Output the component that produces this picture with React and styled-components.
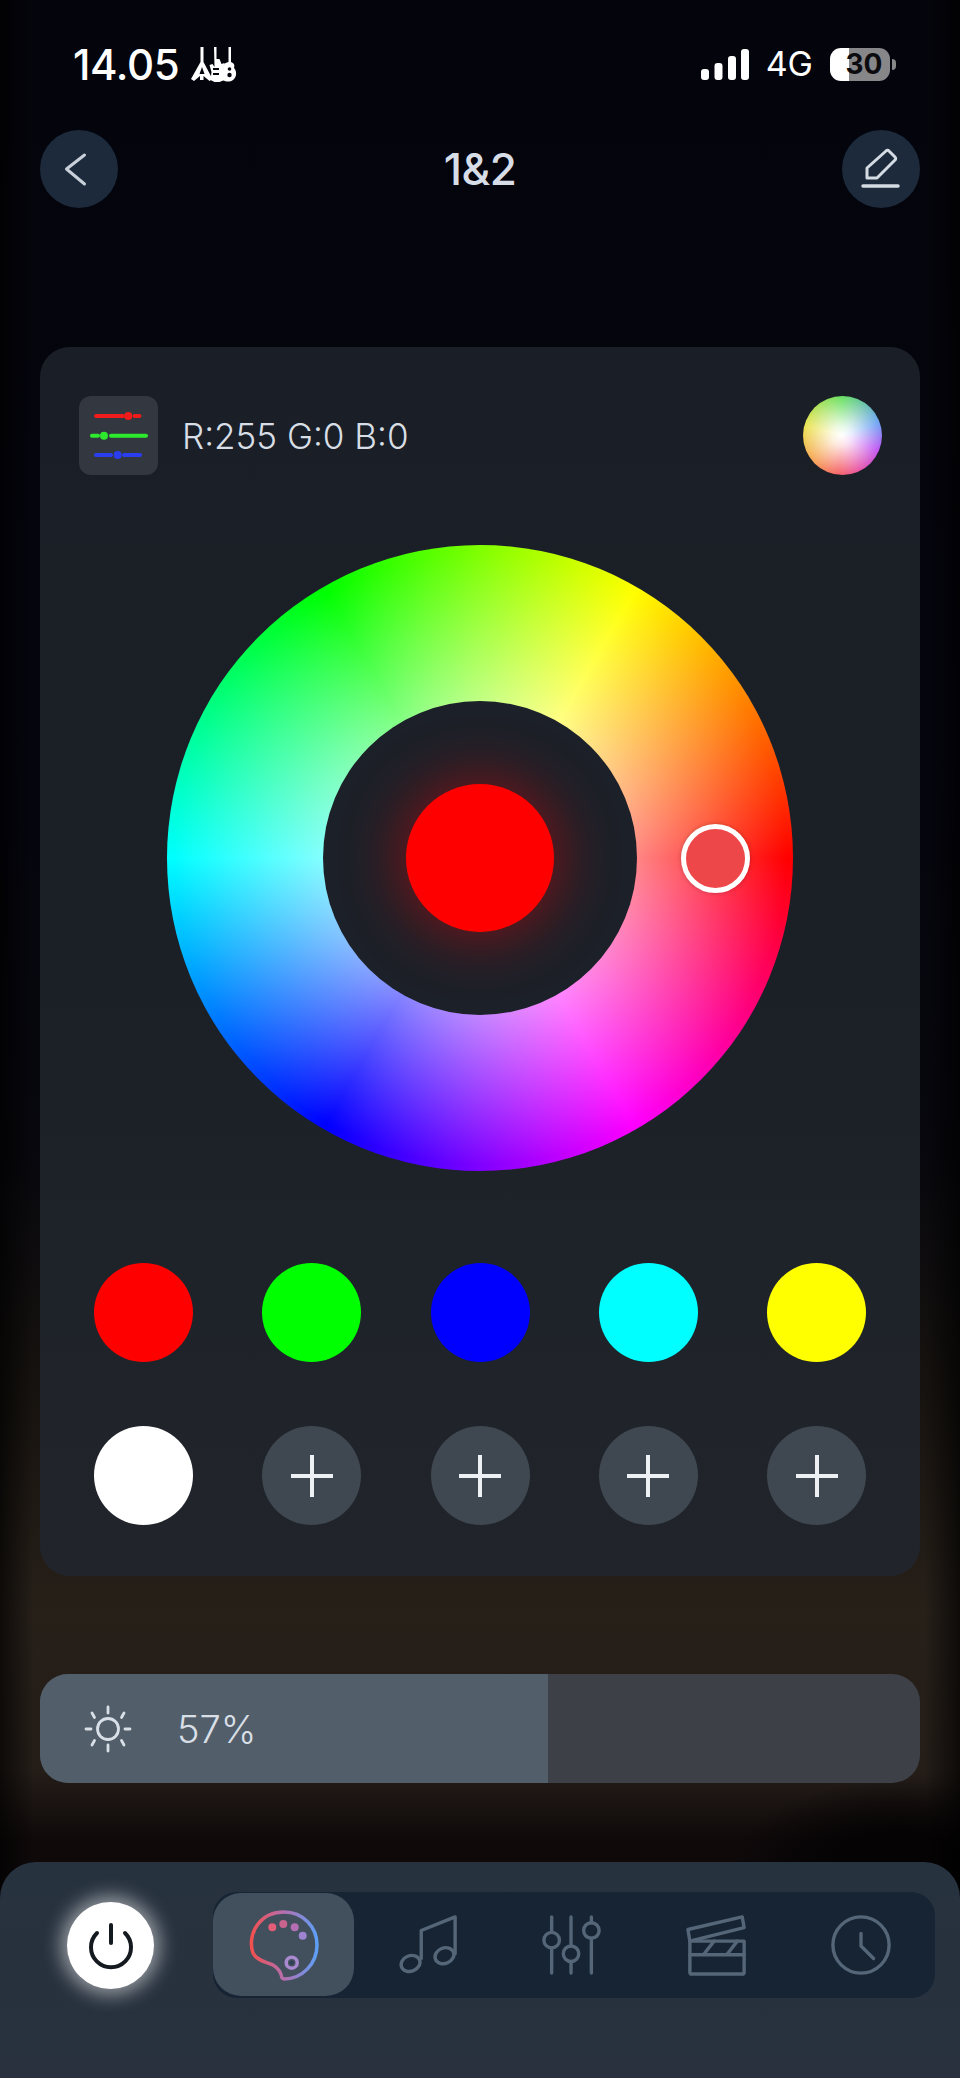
import React from 'react';
import styled, { createGlobalStyle } from 'styled-components';

const GlobalStyle = createGlobalStyle`
  html, body {
    margin: 0;
    padding: 0;
    background: #05050e;
  }

  * {
    box-sizing: border-box;
  }
`;

const swatches = ['#ff0000', '#00ff00', '#0000ff', '#00ffff', '#ffff00', '#ffffff', null, null, null, null];
const brightness = 57.7;

function GuitarsIcon() {
  return (
    <StatusGlyph viewBox="0 0 70 55" fill="#fff">
      <path d="M21.500 12h3v15l9 17-3 2-6-5v4h-3.500v-4l-6 5-3-2 9.500-17z" />
      <path d="M35 12h2.500v12h3l2 5 3-1-1 9 1 8-5 2h-5l-4-2 1-8-2-7 3-1 2 3z" />
      <path d="M49.500 12h2.500v15c3 1 4 3 3 6 3 3 3 9-1 12-3 2-7 2-10 0-2-3-2-9 1-12-1-3 0-5 4.500-6z" />
      <g fill="#05050e">
        <path d="M23 32l2.500 7h-5z" />
        <rect x="34" y="33" width="6" height="2" />
        <rect x="34" y="38" width="6" height="2" />
        <circle cx="50.500" cy="34" r="1.800" />
        <circle cx="50.500" cy="40" r="2.200" />
      </g>
    </StatusGlyph>
  );
}

function SignalIcon() {
  return (
    <SignalSvg viewBox="0 0 48 31" fill="#fff">
      <rect x="0" y="20" width="8" height="11" rx="3" />
      <rect x="13.500" y="14" width="8" height="17" rx="3" />
      <rect x="27" y="7" width="8" height="24" rx="3" />
      <rect x="40" y="0" width="8" height="31" rx="3" />
    </SignalSvg>
  );
}

function SliderBarsIcon() {
  return (
    <svg width="79" height="79" viewBox="0 0 79 79" fill="none" strokeWidth="4" strokeLinecap="round">
      <g stroke="#f01c1c" fill="#f01c1c">
        <path d="M17 20h27M55.500 20h5" />
        <circle cx="49.300" cy="20" r="2" />
      </g>
      <g stroke="#2eea2e" fill="#2eea2e">
        <path d="M13 39.700h6M32 39.700h35" />
        <circle cx="25" cy="39.700" r="2" />
      </g>
      <g stroke="#2a3ef0" fill="#2a3ef0">
        <path d="M17 59h15M45 59h16" />
        <circle cx="38.700" cy="59" r="2" />
      </g>
    </svg>
  );
}

function SunIcon() {
  return (
    <svg width="48" height="48" viewBox="0 0 48 48" fill="none" stroke="#d8dfe7" strokeWidth="2.800" strokeLinecap="round">
      <circle cx="24" cy="24" r="10.500" />
      <path d="M24 2v6M24 40v6M2 24h5M41 24h5M8 8l2.500 4.500M40 8l-2.500 4.500M8 40l2.500-4.500M40 40l-2.500-4.500" />
    </svg>
  );
}

function PaletteIcon() {
  return (
    <svg width="72" height="72" viewBox="0 0 72 72" fill="none">
      <defs>
        <linearGradient id="paletteStroke" x1="0" y1="0" x2="1" y2="0">
          <stop offset="0" stopColor="#f2504f" />
          <stop offset="0.5" stopColor="#b56fb0" />
          <stop offset="1" stopColor="#5d9ff7" />
        </linearGradient>
      </defs>
      <path
        d="M34 69C33 63 30 59 25 56 19 53 9 52 5 44 2 36 3 24 10 15 17 6 27 3 36 3 55 3 69 18 69 36 69 55 54 70 36 70Z"
        stroke="url(#paletteStroke)"
        strokeWidth="3.500"
        strokeLinejoin="round"
      />
      <circle cx="24.300" cy="18.300" r="4" fill="#e25d78" />
      <circle cx="35.300" cy="15" r="4" fill="#c9648f" />
      <circle cx="46.700" cy="18.300" r="4" fill="#b46fb4" />
      <circle cx="54.700" cy="26.700" r="4" fill="#9d83d0" />
      <circle cx="43.700" cy="53.700" r="5.500" stroke="#a98ad0" strokeWidth="3.500" />
      <circle cx="43.700" cy="53.700" r="2" fill="#2f3f55" />
    </svg>
  );
}

function MusicIcon() {
  return (
    <NavSvg viewBox="0 0 60 64">
      <ellipse cx="12" cy="51" rx="10" ry="8" transform="rotate(-22 12 51)" />
      <ellipse cx="47" cy="43" rx="10" ry="8" transform="rotate(-22 47 43)" />
      <path d="M23 46V17L58 3v38" />
    </NavSvg>
  );
}

function SlidersIcon() {
  return (
    <NavSvg viewBox="0 0 60 64">
      <path d="M9 3v16M9 35v26M29 3v30M29 49v12M50 3v6M50 25v36" />
      <circle cx="9" cy="27" r="8" />
      <circle cx="29" cy="41" r="8" />
      <circle cx="50" cy="17" r="8" />
    </NavSvg>
  );
}

function ClapperIcon() {
  return (
    <NavSvg viewBox="0 0 64 64">
      <path d="M4 28h56v32a2 2 0 0 1-2 2H6a2 2 0 0 1-2-2z" />
      <path d="M4 42h56M18 42l11-14M42 42l11-14" />
      <path d="M2 16L58 3l2 11L4 28z" />
    </NavSvg>
  );
}

function ClockIcon() {
  return (
    <NavSvg viewBox="0 0 64 64">
      <circle cx="32" cy="32" r="29" />
      <path d="M32 20v13l13 13" />
    </NavSvg>
  );
}

const navIcons = [PaletteIcon, MusicIcon, SlidersIcon, ClapperIcon, ClockIcon];

export default function App() {
  return (
    <Page>
      <GlobalStyle />
      <StatusBar>
        <TimeGroup>
          <Time>14.05</Time>
          <GuitarsIcon />
        </TimeGroup>
        <StatusRight>
          <SignalIcon />
          <Network>4G</Network>
          <Battery>30</Battery>
        </StatusRight>
      </StatusBar>

      <Header>
        <RoundButton>
          <svg width="78" height="78" viewBox="0 0 78 78" fill="none" stroke="#c9d0da" strokeWidth="3" strokeLinecap="round" strokeLinejoin="round">
            <path d="M44.500 25L26.500 39l18 15" />
          </svg>
        </RoundButton>
        <Title>1&amp;2</Title>
        <RoundButton>
          <svg width="78" height="78" viewBox="0 0 78 78" fill="none" stroke="#d5dbe3" strokeWidth="3" strokeLinecap="round" strokeLinejoin="round">
            <path d="M44 21a2 2 0 0 1 3 0l6 6a2 2 0 0 1 0 3L35 48H25V38z" />
            <path d="M21 56h35" strokeWidth="3.500" />
          </svg>
        </RoundButton>
      </Header>

      <Card>
        <CardHead>
          <RgbBadge><SliderBarsIcon /></RgbBadge>
          <RgbText>R:255 G:0 B:0</RgbText>
          <ColorBall />
        </CardHead>

        <Wheel>
          <WheelHole>
            <CurrentColor />
          </WheelHole>
          <WheelThumb />
        </Wheel>

        <SwatchGrid>
          {swatches.map((color, i) => (
            <Swatch key={i} $color={color}>
              {!color && <PlusMark />}
            </Swatch>
          ))}
        </SwatchGrid>
      </Card>

      <Brightness>
        <BrightnessFill style={{ width: `${brightness}%` }} />
        <BrightnessLabel>
          <SunIcon />
          <BrightnessValue>57%</BrightnessValue>
        </BrightnessLabel>
      </Brightness>

      <BottomNav>
        <PowerButton>
          <svg width="48" height="48" viewBox="0 0 48 48" fill="none" stroke="#151a21" strokeWidth="4" strokeLinecap="round">
            <path d="M10 11A20 20 0 1 0 38 11" />
            <path d="M24 3v18" />
          </svg>
        </PowerButton>
        <TabTrack>
          {navIcons.map((Icon, i) => (
            <Tab key={i} $active={i === 0}>
              <Icon />
            </Tab>
          ))}
        </TabTrack>
      </BottomNav>
    </Page>
  );
}

const Page = styled.div`
  width: 960px;
  height: 2078px;
  display: flex;
  flex-direction: column;
  overflow: hidden;
  font-family: Inter, "Liberation Sans", sans-serif;
  background:
    linear-gradient(90deg, rgba(0, 0, 0, 0.65) 0, rgba(0, 0, 0, 0) 34px, rgba(0, 0, 0, 0) 925px, rgba(0, 0, 0, 0.65) 100%),
    radial-gradient(ellipse 170px 90px at 900px 1870px, #050304 40%, rgba(5, 3, 4, 0) 100%),
    linear-gradient(180deg, #04040c 0, #05050e 800px, #07070d 1150px, #17130f 1400px, #272019 1610px, #241d18 1770px, #0f090a 1840px, #0b0708 100%);
`;

const StatusBar = styled.div`
  height: 130px;
  padding: 48px 70px 0 73px;
  display: flex;
  justify-content: space-between;
  align-items: flex-start;
`;

const TimeGroup = styled.div`
  display: flex;
  align-items: flex-start;
`;

const Time = styled.span`
  font-size: 42px;
  line-height: 34px;
  font-weight: 500;
  color: #fff;
  letter-spacing: -0.4px;
`;

const StatusGlyph = styled.svg`
  width: 70px;
  height: 55px;
  margin-top: -13px;
`;

const StatusRight = styled.div`
  display: flex;
  align-items: center;
  height: 34px;
  margin-top: -1px;
`;

const SignalSvg = styled.svg`
  width: 48px;
  height: 31px;
`;

const Network = styled.span`
  margin: 0 17px 0 17px;
  font-size: 34px;
  line-height: 34px;
  color: #fff;
`;

const Battery = styled.span`
  position: relative;
  width: 60px;
  height: 33px;
  border-radius: 11px;
  background: linear-gradient(90deg, #fff 32%, #87878a 32%);
  color: #0c0c10;
  font-size: 28px;
  font-weight: 700;
  line-height: 33px;
  text-align: center;
  padding-left: 8px;

  &::after {
    content: '';
    position: absolute;
    left: 62px;
    top: 11px;
    width: 4px;
    height: 11px;
    border-radius: 0 5px 5px 0;
    background: #87878a;
  }
`;

const Header = styled.div`
  height: 78px;
  padding: 0 40px;
  display: flex;
  justify-content: space-between;
  align-items: center;
`;

const RoundButton = styled.button`
  width: 78px;
  height: 78px;
  padding: 0;
  border: none;
  border-radius: 50%;
  background: #1c2a3b;
  display: block;

  svg {
    display: block;
  }
`;

const Title = styled.div`
  font-size: 44px;
  font-weight: 500;
  color: #d7dde6;
  letter-spacing: -0.5px;
`;

const Card = styled.div`
  width: 880px;
  height: 1229px;
  margin: 139px 0 0 40px;
  padding: 49px 38px 0 39px;
  border-radius: 30px;
  background: linear-gradient(180deg, #1a1f27 0, #1b2027 50%, #21252b 100%);
  display: flex;
  flex-direction: column;
`;

const CardHead = styled.div`
  display: flex;
  align-items: center;
`;

const RgbBadge = styled.div`
  width: 79px;
  height: 79px;
  border-radius: 12px;
  background: #33373f;

  svg {
    display: block;
  }
`;

const RgbText = styled.div`
  margin-left: 24px;
  font-size: 35px;
  font-weight: 300;
  color: #d8dee6;
  flex: 1;
`;

const ColorBall = styled.div`
  width: 79px;
  height: 79px;
  border-radius: 50%;
  background:
    radial-gradient(circle at 50% 50%, #fff 0, rgba(255, 255, 255, 0.85) 18%, rgba(255, 255, 255, 0) 85%),
    conic-gradient(#45d83f 0deg, #4a8ff0 70deg, #b12ff0 112deg, #e42f90 155deg, #f23f45 185deg, #f59130 230deg, #e6dd2c 285deg, #45d83f 360deg);
`;

const Wheel = styled.div`
  position: relative;
  width: 626px;
  height: 626px;
  margin: 70px 0 0 88px;
  border-radius: 50%;
  display: flex;
  align-items: center;
  justify-content: center;
  background:
    radial-gradient(closest-side, #fff 0, rgba(255, 255, 255, 0.52) 50%, rgba(255, 255, 255, 0) 98%),
    conic-gradient(from 90deg, #f00 0deg, #f0f 60deg, #00f 120deg, #0ff 180deg, #0f0 240deg, #ff0 300deg, #f00 360deg);
`;

const WheelHole = styled.div`
  width: 314px;
  height: 314px;
  border-radius: 50%;
  background: #1c2028;
  display: flex;
  align-items: center;
  justify-content: center;
  overflow: hidden;
`;

const CurrentColor = styled.div`
  width: 148px;
  height: 148px;
  border-radius: 50%;
  background: #f00;
  box-shadow: 0 0 60px 6px rgba(255, 0, 0, 0.42);
`;

const WheelThumb = styled.div`
  position: absolute;
  left: 514px;
  top: 279px;
  width: 69px;
  height: 69px;
  border: 5px solid #fff;
  border-radius: 50%;
  background: #ee4749;
  box-shadow: 0 0 4px rgba(0, 0, 0, 0.25);
`;

const SwatchGrid = styled.div`
  margin: 92px 16px 0 15px;
  display: grid;
  grid-template-columns: repeat(5, 99px);
  justify-content: space-between;
  row-gap: 64px;
`;

const Swatch = styled.div`
  width: 99px;
  height: 99px;
  border-radius: 50%;
  background: ${({ $color }) => $color || '#3f4850'};
  display: flex;
  align-items: center;
  justify-content: center;
`;

const PlusMark = styled.span`
  width: 42px;
  height: 42px;
  background:
    linear-gradient(#eef1f4, #eef1f4) center / 42px 4px no-repeat,
    linear-gradient(#eef1f4, #eef1f4) center / 4px 42px no-repeat;
`;

const Brightness = styled.div`
  position: relative;
  width: 880px;
  height: 109px;
  margin: 98px 0 0 40px;
  border-radius: 28px;
  background: #3d4147;
  overflow: hidden;
`;

const BrightnessFill = styled.div`
  position: absolute;
  left: 0;
  top: 0;
  bottom: 0;
  background: #525f6b;
`;

const BrightnessLabel = styled.div`
  position: relative;
  height: 100%;
  padding-left: 44px;
  display: flex;
  align-items: center;
`;

const BrightnessValue = styled.span`
  margin-left: 45px;
  font-size: 38px;
  font-weight: 300;
  color: #d9dfe7;
`;

const BottomNav = styled.div`
  margin-top: auto;
  height: 216px;
  padding: 30px 25px 0 67px;
  border-radius: 36px 36px 0 0;
  background: linear-gradient(180deg, #27323f 0, #28313d 100%);
  display: flex;
  align-items: flex-start;
  justify-content: space-between;
`;

const PowerButton = styled.button`
  width: 87px;
  height: 87px;
  margin-top: 10px;
  padding: 0;
  border: none;
  border-radius: 50%;
  background: #fff;
  box-shadow: 0 0 18px 6px rgba(255, 255, 255, 0.5);
  display: flex;
  align-items: center;
  justify-content: center;
`;

const TabTrack = styled.div`
  width: 722px;
  height: 106px;
  border-radius: 24px;
  background: #162433;
  display: grid;
  grid-template-columns: repeat(5, 1fr);
`;

const Tab = styled.div`
  display: flex;
  align-items: center;
  justify-content: center;
  border-radius: 28px;
  margin: 1px 3px 2px 0;
  background: ${({ $active }) => ($active ? '#424f5d' : 'transparent')};
`;

const NavSvg = styled.svg`
  width: 62px;
  height: 62px;
  fill: none;
  stroke: #556678;
  stroke-width: 3.5;
  stroke-linecap: round;
  stroke-linejoin: round;
`;
